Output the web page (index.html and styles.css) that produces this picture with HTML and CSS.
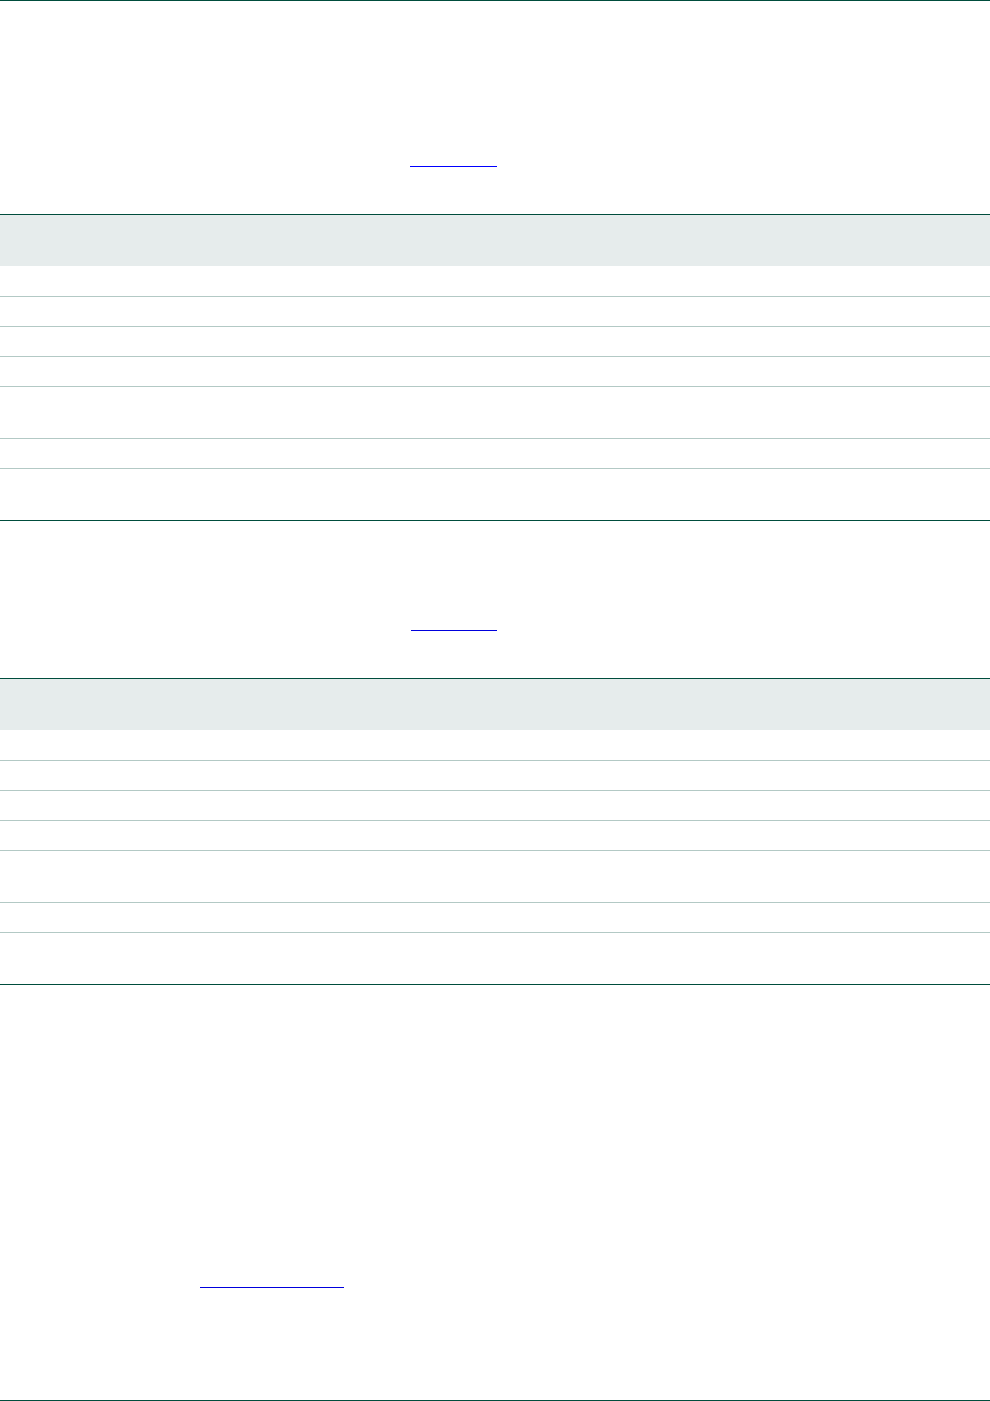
FILE: index.html
```html
<!DOCTYPE html>
<html lang="en">
<head>
<meta charset="utf-8">
<title>Document</title>
<link rel="stylesheet" href="styles.css">
</head>
<body>
<div class="page">
  <section class="block block-first">
    <div class="ref"><a class="link link-a" href="#t1" aria-label="Table 1"></a></div>
  </section>
  <table class="grid" id="t1">
    <thead><tr class="head"><th></th></tr></thead>
    <tbody>
      <tr class="r first"><td></td></tr>
      <tr class="r"><td></td></tr>
      <tr class="r"><td></td></tr>
      <tr class="r"><td></td></tr>
      <tr class="r tall"><td></td></tr>
      <tr class="r"><td></td></tr>
      <tr class="r tall last"><td></td></tr>
    </tbody>
  </table>
  <section class="block block-mid">
    <div class="ref"><a class="link link-b" href="#t2" aria-label="Table 2"></a></div>
  </section>
  <table class="grid" id="t2">
    <thead><tr class="head"><th></th></tr></thead>
    <tbody>
      <tr class="r first"><td></td></tr>
      <tr class="r"><td></td></tr>
      <tr class="r"><td></td></tr>
      <tr class="r"><td></td></tr>
      <tr class="r tall"><td></td></tr>
      <tr class="r"><td></td></tr>
      <tr class="r tall last"><td></td></tr>
    </tbody>
  </table>
  <section class="block block-end">
    <div class="ref"><a class="link link-c" href="#t1" aria-label="Reference"></a></div>
  </section>
</div>
</body>
</html>
```
FILE: styles.css
```css
html, body {
  margin: 0;
  padding: 0;
  background: #ffffff;
  font-family: "Liberation Sans", Arial, sans-serif;
}
.page {
  box-sizing: border-box;
  height: 1401px;
  border-top: 1px solid #004d3d;
  border-bottom: 1px solid #004d3d;
  display: flex;
  flex-direction: column;
}
.block {
  display: flex;
  flex-direction: column;
}
.block-first {
  padding-top: 165px;
  padding-bottom: 47px;
}
.block-mid {
  padding-top: 109px;
  padding-bottom: 47px;
}
.block-end {
  padding-top: 302px;
}
.ref {
  display: flex;
  height: 1px;
}
.link {
  display: block;
  height: 1px;
  background: #0000ff;
}
.link-a { margin-left: 410px; width: 87px; }
.link-b { margin-left: 411px; width: 86px; background: #0000dd; }
.link-c { margin-left: 200px; width: 144px; background: #0000dd; }

.grid {
  width: 100%;
  border-collapse: collapse;
  border-top: 1px solid #004d3d;
  border-bottom: 1px solid #004d3d;
}
.grid th, .grid td {
  padding: 0;
}
.head th {
  height: 51px;
  background: #e6ecec;
}
.r td {
  height: 29px;
  border-top: 1px solid #b3c9c5;
}
.r.first td {
  height: 30px;
  border-top: none;
}
.r.tall td {
  height: 51px;
}
```
